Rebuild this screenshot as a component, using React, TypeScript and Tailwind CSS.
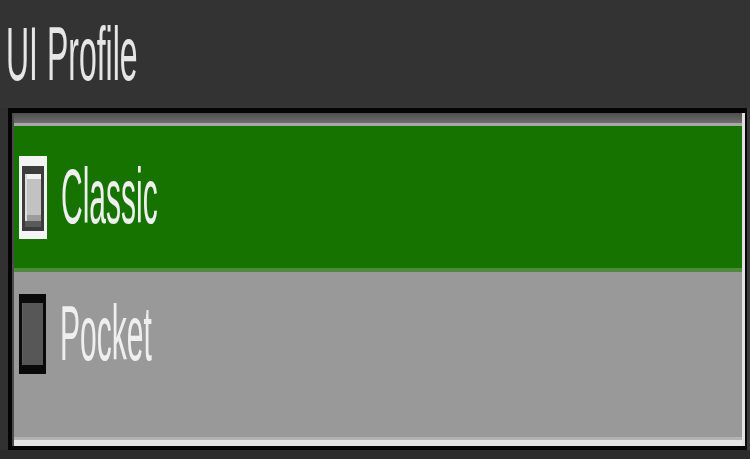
import React from "react";

const font = "font-['Liberation_Sans',Arial,sans-serif]";

function ClassicIcon() {
  return (
    <div className="w-[28px] h-[83px] bg-[#f4f4f4] pt-[10px] pb-[8px] px-[3px] flex">
      <div className="flex-1 bg-[#3c3c3c] pt-[8px] pb-[4px] px-[3px] flex flex-col">
        <div className="flex-1 flex flex-col bg-[#c2c2c2] border-l-[2px] border-[#dcdcdc]">
          <div className="h-[5px] bg-[#f2f2f2]" />
          <div className="flex-1" />
          <div className="h-[6px] bg-[#9c9c9c]" />
        </div>
        <div className="h-[6px] bg-[#5a5a5a]" />
      </div>
    </div>
  );
}

function PocketIcon() {
  return (
    <div className="w-[27px] h-[80px] bg-[#0a0a0a] pt-[9px] pb-[9px] px-[3px] flex">
      <div className="flex-1 bg-[#575757] border-l-[1px] border-[#606060]" />
    </div>
  );
}

function Label({ text }: { text: string }) {
  return (
    <span
      className={`inline-block ${font} text-[30px] leading-none text-[#efefef] scale-y-[2.6] origin-center`}
    >
      {text}
    </span>
  );
}

export default function App() {
  return (
    <div className="w-[750px] h-[459px] bg-[#333333] flex flex-col overflow-hidden">
      <div className="h-[108px] flex items-center pl-[6px]">
        <span
          className={`inline-block ${font} text-[32px] leading-none text-[#e6e6e6] scale-y-[2.36] origin-center`}
        >
          UI Profile
        </span>
      </div>
      <div className="h-[342px] flex">
        <div className="w-[8px] bg-[#313131]" />
        <div className="flex-1 flex border-t-[5px] border-l-[4px] border-r-[2px] border-b-[4px] border-[#050505]">
          <div className="w-[2px] bg-[#4c4c4c]" />
          <div className="flex-1 flex flex-col">
            <div className="h-[10px] bg-gradient-to-b from-[#4e4e4e] to-[#6e6e6e]" />
            <div className="h-[3px] bg-[#a8a8a8]" />
            <div className="h-[142px] bg-[#177300] flex items-center pl-[5px]">
              <ClassicIcon />
              <div className="ml-[14px]">
                <Label text="Classic" />
              </div>
            </div>
            <div className="h-[4px] bg-[#4e8a3e]" />
            <div className="flex-1 bg-[#999999] flex flex-col">
              <div className="h-[124px] flex items-center pl-[5px]">
                <PocketIcon />
                <div className="ml-[14px]">
                  <Label text="Pocket" />
                </div>
              </div>
            </div>
            <div className="h-[3px] bg-[#b2b2b2]" />
            <div className="h-[6px] bg-[#e6e6e6]" />
          </div>
          <div className="w-[3px] bg-[#e0e0e0]" />
        </div>
        <div className="w-[3px] bg-[#3a3a3a]" />
      </div>
      <div className="flex-1 bg-[#2b2b2b]" />
    </div>
  );
}
